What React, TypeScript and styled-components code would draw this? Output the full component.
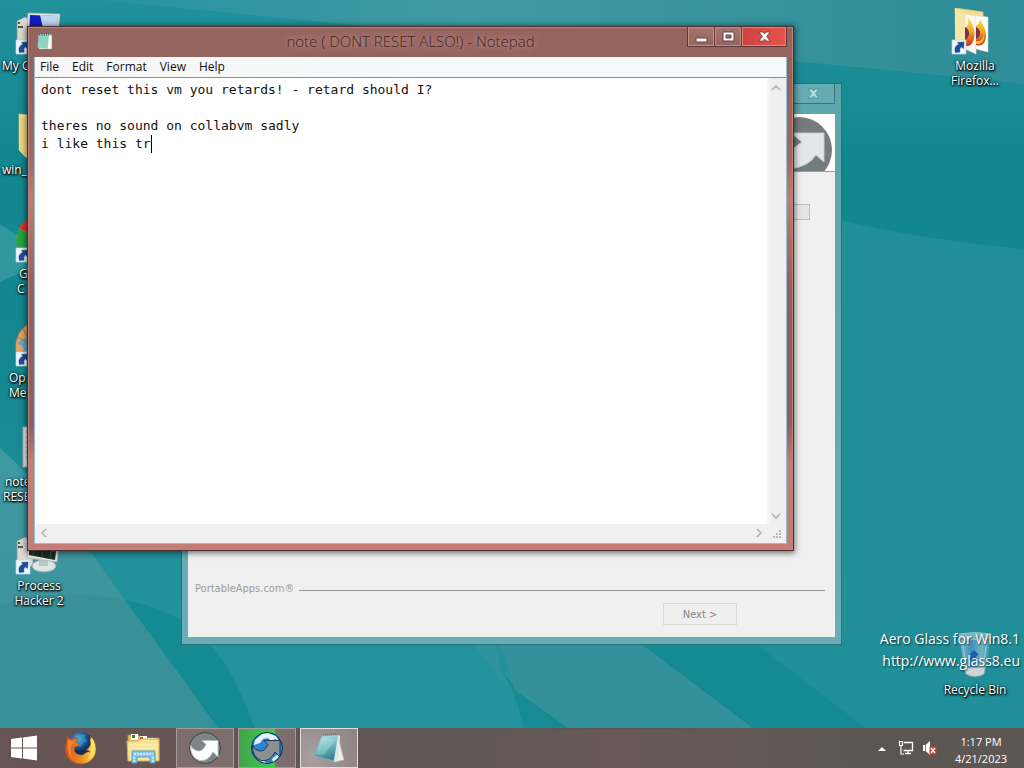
import React from "react";
import styled, { createGlobalStyle } from "styled-components";

const ui = `"Open Sans", "Noto Sans", sans-serif`;
const dialogFont = `"DejaVu Sans Condensed", "DejaVu Sans", sans-serif`;

const GlobalStyle = createGlobalStyle`
  * { box-sizing: border-box; }
  body { margin: 0; font-family: ${ui}; font-size: 12px; }
  button { font-family: inherit; padding: 0; margin: 0; cursor: default; }
`;

const Desktop = styled.div`
  position: relative;
  min-height: 100vh;
  display: grid;
  grid-template-rows: 1fr auto;
  overflow: hidden;
  background: #209099;
`;

const Wallpaper = styled.svg`
  position: absolute;
  inset: 0;
  width: 100%;
  height: 100%;
`;

const IconArea = styled.main`
  position: relative;
  display: flex;
  justify-content: space-between;
  padding-right: 10px;
`;

const IconColumn = styled.div<{ $spread?: boolean }>`
  display: flex;
  flex-direction: column;
  justify-content: ${(p) => (p.$spread ? "space-between" : "flex-start")};
  width: 78px;
`;

const Shortcut = styled.button`
  display: flex;
  flex-direction: column;
  align-items: center;
  height: 104px;
  padding-top: 8px;
  border: 0;
  background: none;
  color: #fff;
  font-size: 12px;
  line-height: 15px;
  text-shadow: 0 1px 2px #000, 1px 1px 2px #000, 0 0 3px rgba(0, 0, 0, 0.7);
  white-space: nowrap;
  svg { display: block; margin-bottom: 2px; flex: none; }
`;

const LabelLine = styled.span<{ $width?: number }>`
  width: ${(p) => (p.$width ? `${p.$width}px` : "auto")};
  text-align: left;
`;

const Watermark = styled.p`
  position: absolute;
  right: 4px;
  bottom: 96px;
  margin: 0;
  color: #fff;
  font-size: 14px;
  line-height: 22px;
  text-align: right;
  text-shadow: 1px 1px 2px rgba(0, 0, 0, 0.75);
`;

const InstallerWindow = styled.section`
  position: absolute;
  left: 181px;
  top: 83px;
  width: 661px;
  height: 562px;
  display: flex;
  flex-direction: column;
  padding: 0 6px 7px;
  border: 1px solid #2e6f77;
  background: linear-gradient(#5ba7ac, #69adb5);
`;

const InstallerTitle = styled.header`
  display: flex;
  justify-content: flex-end;
  height: 30px;
`;

const FadedClose = styled.button`
  width: 44px;
  height: 20px;
  border: 1px solid #39767c;
  border-top: 0;
  background: #65adb1;
  display: grid;
  place-items: center;
`;

const InstallerBody = styled.div`
  flex: 1;
  display: flex;
  flex-direction: column;
  background: #f0f0f0;
`;

const InstallerBanner = styled.div`
  display: flex;
  justify-content: flex-end;
  height: 58px;
  background: #fff;
  border-bottom: 1px solid #9a9da0;
`;

const InstallerContent = styled.div`
  flex: 1;
  padding: 32px 25px 0;
`;

const Progress = styled.div`
  height: 16px;
  border: 1px solid #bcbcbc;
  background: #e6e6e6;
`;

const InstallerBrand = styled.div`
  display: flex;
  align-items: center;
  gap: 5px;
  padding: 0 10px 0 7px;
  color: #9c9c9c;
  font-family: ${dialogFont};
  font-size: 11px;
  line-height: 16px;
  &::after {
    content: "";
    flex: 1;
    height: 1px;
    margin-top: 2px;
    background: #969696;
  }
`;

const InstallerFooter = styled.footer`
  display: flex;
  justify-content: flex-end;
  padding: 6px 98px 12px;
`;

const NextButton = styled.button`
  width: 74px;
  height: 22px;
  border: 1px solid #d9d9d9;
  background: #efefef;
  color: #838383;
  font-family: ${dialogFont};
  font-size: 11px;
`;

const NotepadWindow = styled.section`
  position: absolute;
  left: 27px;
  top: 26px;
  width: 767px;
  height: 525px;
  display: flex;
  flex-direction: column;
  padding: 0 6px 6px;
  border: 1px solid #4b2c2e;
  background: linear-gradient(#96645f 0, #96645f 12%, #a06a63 25%, #c17b70 33%, #93605b 50%, #8f605b 76%, #c77b75 83%, #c47d76 100%);
  box-shadow: inset 0 0 0 1px #b98781, 0 1px 6px 1px rgba(0, 0, 0, 0.55);
`;

const TitleBar = styled.header`
  position: relative;
  display: grid;
  grid-template-columns: 1fr auto 1fr;
  height: 30px;
  margin: 0 -5px;
  padding: 0 5px;
`;

const AppIcon = styled.span`
  padding: 5px 0 0 2px;
`;

const Title = styled.h1`
  margin: 0;
  color: #3f2524;
  font-size: 15px;
  font-weight: 300;
  line-height: 28px;
  white-space: nowrap;
  text-shadow: 0 0 8px #cfa6a0, 0 0 4px #b58a84;
`;

const Controls = styled.div`
  display: flex;
  justify-content: flex-end;
`;

const ControlButton = styled.button<{ $close?: boolean }>`
  display: grid;
  place-items: center;
  width: ${(p) => (p.$close ? 45 : 28)}px;
  height: 20px;
  border: 1px solid #5e3635;
  border-top: 0;
  border-left-width: ${(p) => (p.$close ? 0 : 1)}px;
  margin-left: ${(p) => (p.$close ? 0 : -1)}px;
  background: ${(p) =>
    p.$close ? "linear-gradient(100deg, #cb4340, #e8534c)" : "linear-gradient(#a7736e, #946661)"};
  box-shadow: inset 0 0 0 1px ${(p) => (p.$close ? "#e88680" : "#bd928d")};
`;

const Client = styled.div`
  flex: 1;
  display: flex;
  flex-direction: column;
  min-height: 0;
  border: 1px solid #98bcd4;
  border-top: 0;
  background: #fff;
`;

const MenuBar = styled.nav`
  display: flex;
  height: 20px;
  background: linear-gradient(90deg, #f8f5f6, #f5fafa 50%, #f5fafa);
`;

const MenuItem = styled.button`
  padding: 0 5px;
  margin-right: 3px;
  border: 0;
  background: none;
  color: #111;
  font-size: 12px;
  line-height: 20px;
`;

const Editor = styled.div`
  flex: 1;
  min-height: 0;
  display: grid;
  grid-template: 1fr 19px / 1fr 19px;
  border-top: 1px solid #4ba3c6;
`;

const TextPane = styled.div`
  position: relative;
  font-family: "DejaVu Sans Mono", "Liberation Mono", monospace;
  font-size: 13px;
  line-height: 18px;
`;

const TextArea = styled.textarea`
  display: block;
  width: 100%;
  height: 100%;
  padding: 3px 6px;
  border: 0;
  outline: 0;
  resize: none;
  overflow: hidden;
  background: transparent;
  color: #111;
  font: inherit;
`;

const Caret = styled.i`
  position: absolute;
  left: calc(6px + 14ch);
  top: 57px;
  width: 1px;
  height: 18px;
  background: #000;
`;

const ScrollBar = styled.div<{ $vertical?: boolean }>`
  display: flex;
  flex-direction: ${(p) => (p.$vertical ? "column" : "row")};
  justify-content: space-between;
  align-items: flex-start;
  background: ${(p) => (p.$vertical ? "linear-gradient(90deg, #f8f8f8, #efefef 5px)" : "#f0f0f0")};
`;

const ScrollButton = styled.button`
  display: grid;
  place-items: center;
  width: 17px;
  height: 17px;
  border: 0;
  background: none;
`;

const Corner = styled.div`
  display: grid;
  place-items: end;
  padding: 4px;
  background: #f0f0f0;
`;

const TaskBar = styled.footer`
  position: relative;
  display: flex;
  align-items: stretch;
  height: 40px;
  background: linear-gradient(90deg, #675454, #5f5655 45%, #685957 60%, #5c5652 85%, #5d5754);
  box-shadow: inset 0 1px 0 #5c5655;
`;

const TaskButton = styled.button<{ $state?: "open" | "progress" | "active" }>`
  display: grid;
  place-items: center;
  width: 58px;
  margin-right: 4px;
  border: 1px solid
    ${(p) => (!p.$state ? "transparent" : p.$state === "active" ? "#e2dcdc" : "#a49a9a")};
  background: ${(p) =>
    !p.$state
      ? "none"
      : p.$state === "progress"
      ? "linear-gradient(90deg, #41a44b, #3bcc50 64%, #7d6f6d 64%, #7a6c6a)"
      : p.$state === "active"
      ? "radial-gradient(circle at 20% 70%, #a89f9e, #8d8281)"
      : "#7d6d6c"};
`;

const StartButton = styled(TaskButton)`
  width: 48px;
`;

const Tray = styled.div`
  display: flex;
  align-items: center;
  margin-left: auto;
  padding-right: 14px;
`;

const TrayButton = styled.button`
  display: grid;
  place-items: center;
  width: 24px;
  height: 24px;
  border: 0;
  background: none;
`;

const Clock = styled.time`
  width: 58px;
  margin-left: 10px;
  padding-top: 3px;
  color: #fff;
  font-size: 11px;
  line-height: 17px;
  text-align: center;
  white-space: nowrap;
`;

const LinkBadge = () => (
  <g>
    <path d="M1 32h14v14H1z" fill="#eef7fe" stroke="#b8d5e6" strokeWidth=".7" />
    <path d="M4.500 44.500c-1.500-4 0-7 3.500-8l-1.500-2 6.500-.5-.5 6.500-2-1.500c-2 .8-2 3-1.500 5z" fill="#1b4f9e" stroke="#143865" strokeWidth=".5" />
  </g>
);

const Monitor = ({ dark }: { dark?: boolean }) => (
  <svg width="48" height="48" viewBox="0 0 48 48" aria-hidden="true">
    <path d="M2 13 10 9l8 4v24l-8 4-8-8z" fill="#dcd9d2" stroke="#938f89" strokeWidth=".7" />
    <path d="M3 15h2M3 19h5" stroke="#555" strokeWidth="2" />
    <ellipse cx="29" cy="38" rx="12" ry="6" fill="#dce6e4" stroke="#9ba9a8" />
    <path d="m24 29 9 2v7h-9z" fill="#b6c7c6" />
    <path d="m13 5 32 1-3 28-30-4z" fill="#e4e5df" stroke="#a5b1ad" strokeWidth=".7" />
    <path d="m15 7 28 1-3 24-26-5z" fill={dark ? "#182e22" : "#0f1fc0"} />
    {dark ? (
      <path d="m14 19 27 5M15 14l27 4M20 7l-2 20M29 8l-2 21M37 9l-2 21" stroke="#45765a" strokeWidth=".7" />
    ) : (
      <path d="m25 7 18 1-2 24-11-3z" fill="#bed4ee" />
    )}
    <LinkBadge />
  </svg>
);

const Folder = () => (
  <svg width="48" height="48" viewBox="0 0 48 48" aria-hidden="true">
    <path d="M4 2 26 4v38L12 46 4 38z" fill="#f6e596" stroke="#dcc26c" strokeWidth=".7" />
    <path d="m4 2 7 6v38l-7-8z" fill="#eed981" />
  </svg>
);

const FirefoxFolder = () => (
  <svg width="48" height="48" viewBox="0 0 48 48" aria-hidden="true">
    <defs>
      <linearGradient id="flame" x2="0" y2="1">
        <stop stopColor="#ffe357" /><stop offset=".5" stopColor="#f3a722" /><stop offset="1" stopColor="#cc2a20" />
      </linearGradient>
    </defs>
    <path d="M4 0 32 4v37L5 38z" fill="#f3de94" stroke="#e2c878" strokeWidth=".7" />
    <path d="m4 0 10 6v38L4 37z" fill="#f5e6a4" />
    <path d="m14 6 11 2v38l-11-5z" fill="#f9f8f4" stroke="#dcdad0" strokeWidth=".5" />
    <path d="m25 8 12 1v35l-12-3z" fill="#fff" stroke="#dddcd8" strokeWidth=".5" />
    <path d="M17 9c4 6 7 11 6.500 18-.5 8-4 12-9.500 11V20c3-2 4-6 3-11z" fill="url(#flame)" />
    <path d="M29 9c1 7 6 10 6 18s-4 12-10 10V18c3-2 4-5 4-9z" fill="url(#flame)" />
    <path d="M14 19c5 2 6 9 0 13zM25 19c5 2 6 9 0 12z" fill="#7a3150" />
    <path d="M25 33c4 1 7-2 8-6 1 6-3 10-8 9z" fill="#f3c32a" />
    <LinkBadge />
  </svg>
);

const Chrome = () => (
  <svg width="48" height="48" viewBox="0 0 48 48" aria-hidden="true">
    <circle cx="24" cy="24" r="23" fill="#edc62e" />
    <path d="M24 24 4 12C11 3 17 1 24 1h20l-8 23z" fill="#e2302e" />
    <path d="m24 24-8 21C6 42 1 34 1 24c0-5 1-8 3-12z" fill="#26a049" />
    <circle cx="24" cy="24" r="10" fill="#427fe2" stroke="#fff" strokeWidth="2" />
    <LinkBadge />
  </svg>
);

const Shell = () => (
  <svg width="48" height="48" viewBox="0 0 48 48" aria-hidden="true">
    <path d="M1 33C-1 20 4 8 16 3c14-4 27 4 30 17-9 13-22 24-36 24z" fill="#e3a568" stroke="#a4704e" strokeWidth=".7" />
    <path d="M3 24c3-6 9-8 13-5s7 10 5 16-9 8-14 6c4-3 4-7 0-10 4-1 2-5-4-7z" fill="#5ba9d2" />
    <path d="m8 9 7 12M19 4v18M30 5l-7 18M41 14 27 27M3 17l9 6" stroke="#c9813f" strokeWidth="1.500" />
    <LinkBadge />
  </svg>
);

const PageIcon = ({ size = 48 }: { size?: number }) => (
  <svg width={size} height={size} viewBox="0 0 48 48" aria-hidden="true">
    <path d="M9 5h33v40H8z" fill="#def2ee" stroke="#9dbdb8" />
    <path d="m7 7 28-1-4 38-27-3z" fill="#8fd3c5" />
    <path d="m35 8 6-1v37l-9-1z" fill="#f4fcf9" />
    <path d="M10 3v6m6-6v6m6-6v6m6-6v6m6-6v6m6-6v6" stroke="#3e6964" strokeWidth="3" />
  </svg>
);

const PaperIcon = () => (
  <svg width="48" height="48" viewBox="0 0 48 48" aria-hidden="true">
    <path d="M8 3h31v40H8z" fill="#e7e9e8" stroke="#a8b0b0" />
    <path d="M11 8h24M11 13h24M11 18h24M11 23h24M11 28h24M11 33h18" stroke="#999" />
  </svg>
);

const RecycleBin = () => (
  <svg width="48" height="48" viewBox="0 0 48 48" aria-hidden="true">
    <defs>
      <linearGradient id="glass"><stop stopColor="#8cc3d6" /><stop offset=".4" stopColor="#4795c4" /><stop offset=".7" stopColor="#84bccf" /><stop offset="1" stopColor="#479aa8" /></linearGradient>
    </defs>
    <path d="M8 3h32l-6 37q-10 5-20 0z" fill="url(#glass)" opacity=".8" />
    <path d="M8 2q16-3 32 0l-1 4q-15 3-30 0z" fill="#7cb4bf" stroke="#a8d0d6" strokeWidth=".7" />
    <path d="m14 36 20-1-1 7q-9 5-18 0z" fill="#cfd5d6" stroke="#a3aaae" strokeWidth=".7" />
    <path d="m18 23 5-5 5 5-3 1 2 6-5-3-4 2 3-5z" fill="#1d5db2" />
    <path d="m11 8 5 29M36 9l-4 26" stroke="#c3e3e8" opacity=".6" />
  </svg>
);

const CloseGlyph = ({ color = "#fff", edge = "#793d3c" }: { color?: string; edge?: string }) => (
  <svg width="13" height="11" viewBox="0 0 13 11" aria-hidden="true">
    <path d="M1 1h4l1.500 2L8 1h4L8.500 5.500 12 10H8L6.500 8 5 10H1l3.500-4.500z" fill={color} stroke={edge} strokeWidth=".8" />
  </svg>
);

const Chevron = ({ d }: { d: string }) => (
  <svg width="10" height="10" viewBox="0 0 10 10" fill="none" aria-hidden="true">
    <path d={d} stroke="#b4b4b4" strokeWidth="1.700" />
  </svg>
);

const WindowsLogo = () => (
  <svg width="28" height="28" viewBox="0 0 28 28" aria-hidden="true">
    <path d="m1 5 11-1.500V13.500H1zM13 3.400 27 1.500v12H13zM1 14.500h11v10L1 23zM13 14.500h14v12l-14-2z" fill="#fff" />
  </svg>
);

const FirefoxLogo = () => (
  <svg width="34" height="34" viewBox="0 0 34 34" aria-hidden="true">
    <defs>
      <radialGradient id="ocean" cx=".4" cy=".25"><stop stopColor="#6fb9dd" /><stop offset=".45" stopColor="#246bad" /><stop offset="1" stopColor="#102d5b" /></radialGradient>
      <linearGradient id="fur"><stop stopColor="#da4b20" /><stop offset=".55" stopColor="#ef9023" /><stop offset="1" stopColor="#ffe76a" /></linearGradient>
    </defs>
    <circle cx="17" cy="14" r="13" fill="url(#ocean)" />
    <path d="M14 4c3-2 6 1 8-1l-2 4 3 3-4 2-3 4-4-2 1-4-3-2z" fill="#3f9bcb" opacity=".6" />
    <path d="M3 5q2 3 5 3l6-1-2 4 4 3-5 2c-2 4 1 8 6 8 4 0 5-4 9-3-1-2-4-2-4-2 4-2 6-8 4-14q6 5 6 13c0 9-7 15-15 15C8 33 1 26 1 18c0-5 2-7 2-13z" fill="url(#fur)" stroke="#98501c" strokeWidth=".6" />
    <path d="M28 7c5 8 2 18-5 22 5-6 6-14 3-20z" fill="#ffe561" />
    <path d="m4 9 6 2-3 4q-2 9 4 15Q2 24 4 9z" fill="#f08a35" />
  </svg>
);

const ExplorerLogo = () => (
  <svg width="34" height="32" viewBox="0 0 34 32" aria-hidden="true">
    <path d="M2 3h10l3 3h18v22H2z" fill="#e7bd60" stroke="#b88d44" />
    <path d="M5 2h7v6H5zM14 4h7v6h-7zM22 6h8v5h-8z" fill="#fff" />
    <path d="M6 3h3v3H6z" fill="#189448" /><path d="M14 5h3v3h-3z" fill="#d93a32" /><path d="M22 7h3v3h-3z" fill="#368dce" />
    <path d="M1 9h11l3-2h18v22H2z" fill="#f7e498" stroke="#cfac5d" />
    <path d="M3 13h29M3 16h29" stroke="#fff2bd" />
    <path d="M6 20q0-1 1-1h21q1 0 1 1v11h-5v-6H11v6H6z" fill="#8ac8ea" stroke="#4f9ec6" />
    <path d="M8 22h19M8 25v5M27 25v5" stroke="#daf4fb" strokeWidth="1.500" strokeDasharray="2 1" />
  </svg>
);

const SwirlLogo = ({ blue }: { blue?: boolean }) => (
  <svg width="34" height="34" viewBox="0 0 34 34" aria-hidden="true">
    <circle cx="17" cy="17" r="15.500" fill={blue ? "#2f86cf" : "#7d8484"} stroke={blue ? "#12304f" : "#3f4649"} strokeWidth="1" />
    {blue && (
      <path d="M5 9 12 3l6-1 8 3 3 5-4-2-4 2-3-3-5 1-3 4-6 2zM7 26l5 1 4 5-6-2zM22 28l6-5 2-2-2 6-5 4z" fill="#e3f1f8" />
    )}
    <path d="M2.500 14Q2 26 11 29.500 20 31 25 21l5 5V9.500H14l4 4Q14 22 8 19.500 4 18 2.500 14z" fill={blue ? "#8c9093" : "#fff"} stroke={blue ? "#17395a" : "#b5bcbd"} strokeWidth="1" />
  </svg>
);

const NotepadLogo = () => (
  <svg width="36" height="32" viewBox="0 0 36 32" aria-hidden="true">
    <defs><linearGradient id="page" x2=".3" y2="1"><stop stopColor="#c2ebec" /><stop offset=".55" stopColor="#70b7c0" /><stop offset="1" stopColor="#398492" /></linearGradient></defs>
    <path d="m27 4 6 24-9 2z" fill="#f0f1ed" stroke="#b5b0a6" strokeWidth=".7" />
    <path d="M11 4 27 3l-4 26-20-5z" fill="url(#page)" stroke="#8fbac0" strokeWidth=".7" />
    <path d="m27 3 2 1-2 25-4 1z" fill="#d7ecec" />
    <path d="m12 3 15-1" stroke="#5c7f83" strokeWidth="1.500" strokeDasharray="1 1" />
    <path d="m11 6 14 1-12 16-8-1z" fill="#d9f5f2" opacity=".25" />
  </svg>
);

interface ShortcutProps {
  icon: React.ReactNode;
  lines: string[];
  widths?: number[];
}

// Labels that run under an open window show their first letters only,
// so each of those lines keeps the width of its whole name.
const shortcuts: ShortcutProps[] = [
  { icon: <Monitor />, lines: ["My C"], widths: [74] },
  { icon: <Folder />, lines: ["win_"], widths: [74] },
  { icon: <Chrome />, lines: ["G", "C"], widths: [40, 44] },
  { icon: <Shell />, lines: ["Op", "Me"], widths: [60, 60] },
  { icon: <PaperIcon />, lines: ["note", "RESE"], widths: [68, 72] },
  { icon: <Monitor dark />, lines: ["Process", "Hacker 2"] },
];

const DesktopShortcut = ({ icon, lines, widths }: ShortcutProps) => (
  <Shortcut>
    {icon}
    {lines.map((line, i) => <LabelLine key={line} $width={widths?.[i]}>{line}</LabelLine>)}
  </Shortcut>
);

const note = `dont reset this vm you retards! - retard should I?

theres no sound on collabvm sadly
i like this tr`;

export default function App() {
  return (
    <Desktop>
      <GlobalStyle />
      <Wallpaper viewBox="0 0 1024 768" preserveAspectRatio="none" aria-hidden="true">
        <defs>
          <linearGradient id="sea" x2="0" y2="1">
            <stop stopColor="#21919b" /><stop offset=".2" stopColor="#138790" /><stop offset=".5" stopColor="#148790" /><stop offset=".7" stopColor="#21919b" /><stop offset="1" stopColor="#23939d" />
          </linearGradient>
          <linearGradient id="band"><stop stopColor="#2793a0" /><stop offset=".4" stopColor="#4099a4" /><stop offset="1" stopColor="#2e8d98" /></linearGradient>
          <linearGradient id="haze" x2="0" y2="1"><stop stopColor="#3f99a3" /><stop offset="1" stopColor="#3a9098" /></linearGradient>
        </defs>
        <path d="M0 0h1024v768H0z" fill="url(#sea)" />
        <path d="M100 0h924v84Q820 62 640 49T100 0z" fill="url(#band)" />
        <path d="M842 221q90 20 182 28v519H842z" fill="#218f99" />
        <path d="M0 225q25 10 32 42L0 282z" fill="#3198a0" />
        <path d="M0 448q50 45 90 103l35 49 55 75 46 60H0z" fill="url(#haze)" />
        <path d="M0 606q60-20 126-5l54 74 46 60H0z" fill="#389099" />
        <path d="M125 600q30 5 58 21 40 30 56 69l20 48h-34l-45-63z" fill="#148a93" />
        <path d="M470 640h25l5 26 20 28-20-14q-14-20-30-40z" fill="#2f939d" />
        <path d="M500 668l18 24 56 40h-50q-6-36-24-64z" fill="#168b94" />
        <path d="M495 640h145l118 92H574l-59-42q-6-28-20-50z" fill="#34909a" />
        <path d="M636 640h115l120 92H758z" fill="#148a93" />
        <path d="M751 640h91l182 92H871z" fill="#1f8f99" />
      </Wallpaper>

      <IconArea>
        <IconColumn>
          {shortcuts.map((s) => <DesktopShortcut key={s.lines[0]} {...s} />)}
        </IconColumn>
        <IconColumn $spread>
          <DesktopShortcut icon={<FirefoxFolder />} lines={["Mozilla", "Firefox..."]} />
          <DesktopShortcut icon={<RecycleBin />} lines={["Recycle Bin"]} />
        </IconColumn>
      </IconArea>

      <Watermark>Aero Glass for Win8.1<br />http://www.glass8.eu</Watermark>

      <InstallerWindow aria-label="PortableApps.com installer">
        <InstallerTitle>
          <FadedClose aria-label="Close installer"><CloseGlyph color="#b5dbdd" edge="#4c8c92" /></FadedClose>
        </InstallerTitle>
        <InstallerBody>
          <InstallerBanner>
            <svg width="64" height="57" viewBox="0 0 64 57" aria-hidden="true">
              <circle cx="28" cy="36" r="33" fill="#747c80" />
              <path d="M20 19h33v29l-8-7Q38 52 20 55V36l11-8z" fill="#e3e7ea" stroke="#c6ccd0" />
            </svg>
          </InstallerBanner>
          <InstallerContent><Progress /></InstallerContent>
          <InstallerBrand>PortableApps.com®</InstallerBrand>
          <InstallerFooter><NextButton>Next &gt;</NextButton></InstallerFooter>
        </InstallerBody>
      </InstallerWindow>

      <NotepadWindow aria-label="Notepad">
        <TitleBar>
          <AppIcon><PageIcon size={18} /></AppIcon>
          <Title>note ( DONT RESET ALSO!) - Notepad</Title>
          <Controls>
            <ControlButton aria-label="Minimize">
              <svg width="13" height="12" viewBox="0 0 13 12" aria-hidden="true"><path d="M1 7h11v4H1z" fill="#fff" stroke="#68403e" /></svg>
            </ControlButton>
            <ControlButton aria-label="Maximize">
              <svg width="13" height="12" viewBox="0 0 13 12" aria-hidden="true"><path d="M1 1h11v9H1zM4 4v3h5V4z" fill="#fff" fillRule="evenodd" stroke="#68403e" /></svg>
            </ControlButton>
            <ControlButton $close aria-label="Close"><CloseGlyph /></ControlButton>
          </Controls>
        </TitleBar>
        <Client>
          <MenuBar>
            {["File", "Edit", "Format", "View", "Help"].map((m) => <MenuItem key={m}>{m}</MenuItem>)}
          </MenuBar>
          <Editor>
            <TextPane>
              <TextArea aria-label="Note text" defaultValue={note} spellCheck={false} />
              <Caret />
            </TextPane>
            <ScrollBar $vertical>
              <ScrollButton aria-label="Scroll up"><Chevron d="m1 8 4-4 4 4" /></ScrollButton>
              <ScrollButton aria-label="Scroll down"><Chevron d="m1 3 4 4 4-4" /></ScrollButton>
            </ScrollBar>
            <ScrollBar>
              <ScrollButton aria-label="Scroll left"><Chevron d="M7 1 3 5l4 4" /></ScrollButton>
              <ScrollButton aria-label="Scroll right"><Chevron d="m3 1 4 4-4 4" /></ScrollButton>
            </ScrollBar>
            <Corner>
              <svg width="9" height="9" viewBox="0 0 9 9" aria-hidden="true">
                <path d="M6 0h2v2H6zM3 3h2v2H3zM6 3h2v2H6zM0 6h2v2H0zM3 6h2v2H3zM6 6h2v2H6z" fill="#b8b8b8" />
              </svg>
            </Corner>
          </Editor>
        </Client>
      </NotepadWindow>

      <TaskBar>
        <StartButton aria-label="Start"><WindowsLogo /></StartButton>
        <TaskButton aria-label="Firefox"><FirefoxLogo /></TaskButton>
        <TaskButton aria-label="File Explorer"><ExplorerLogo /></TaskButton>
        <TaskButton $state="open" aria-label="PortableApps.com installer"><SwirlLogo /></TaskButton>
        <TaskButton $state="progress" aria-label="Download progress"><SwirlLogo blue /></TaskButton>
        <TaskButton $state="active" aria-label="Notepad"><NotepadLogo /></TaskButton>
        <Tray>
          <TrayButton aria-label="Show hidden icons">
            <svg width="8" height="5" viewBox="0 0 8 5" aria-hidden="true"><path d="m0 5 4-4 4 4z" fill="#fff" /></svg>
          </TrayButton>
          <TrayButton aria-label="Network">
            <svg width="16" height="16" viewBox="0 0 16 16" fill="none" stroke="#fff" aria-hidden="true">
              <path d="M6 2.500h8.500v8H5.500M10 11v3M7 13.500h6" strokeWidth="1.300" />
              <path d="M1.500 1.500h3v4h-3zM3 6v8h3" strokeWidth="1.200" />
            </svg>
          </TrayButton>
          <TrayButton aria-label="Volume muted">
            <svg width="16" height="16" viewBox="0 0 16 16" aria-hidden="true">
              <path d="M1 5h2.500L8 1v14l-4.500-4H1z" fill="#fff" />
              <path d="M3.500 5v6" stroke="#8d8482" />
              <path d="M7.500 6.500h7v8h-7z" fill="#d93a30" />
              <path d="m9 8 4 5m0-5-4 5" stroke="#fff" strokeWidth="1.400" />
            </svg>
          </TrayButton>
          <Clock>1:17 PM<br />4/21/2023</Clock>
        </Tray>
      </TaskBar>
    </Desktop>
  );
}
